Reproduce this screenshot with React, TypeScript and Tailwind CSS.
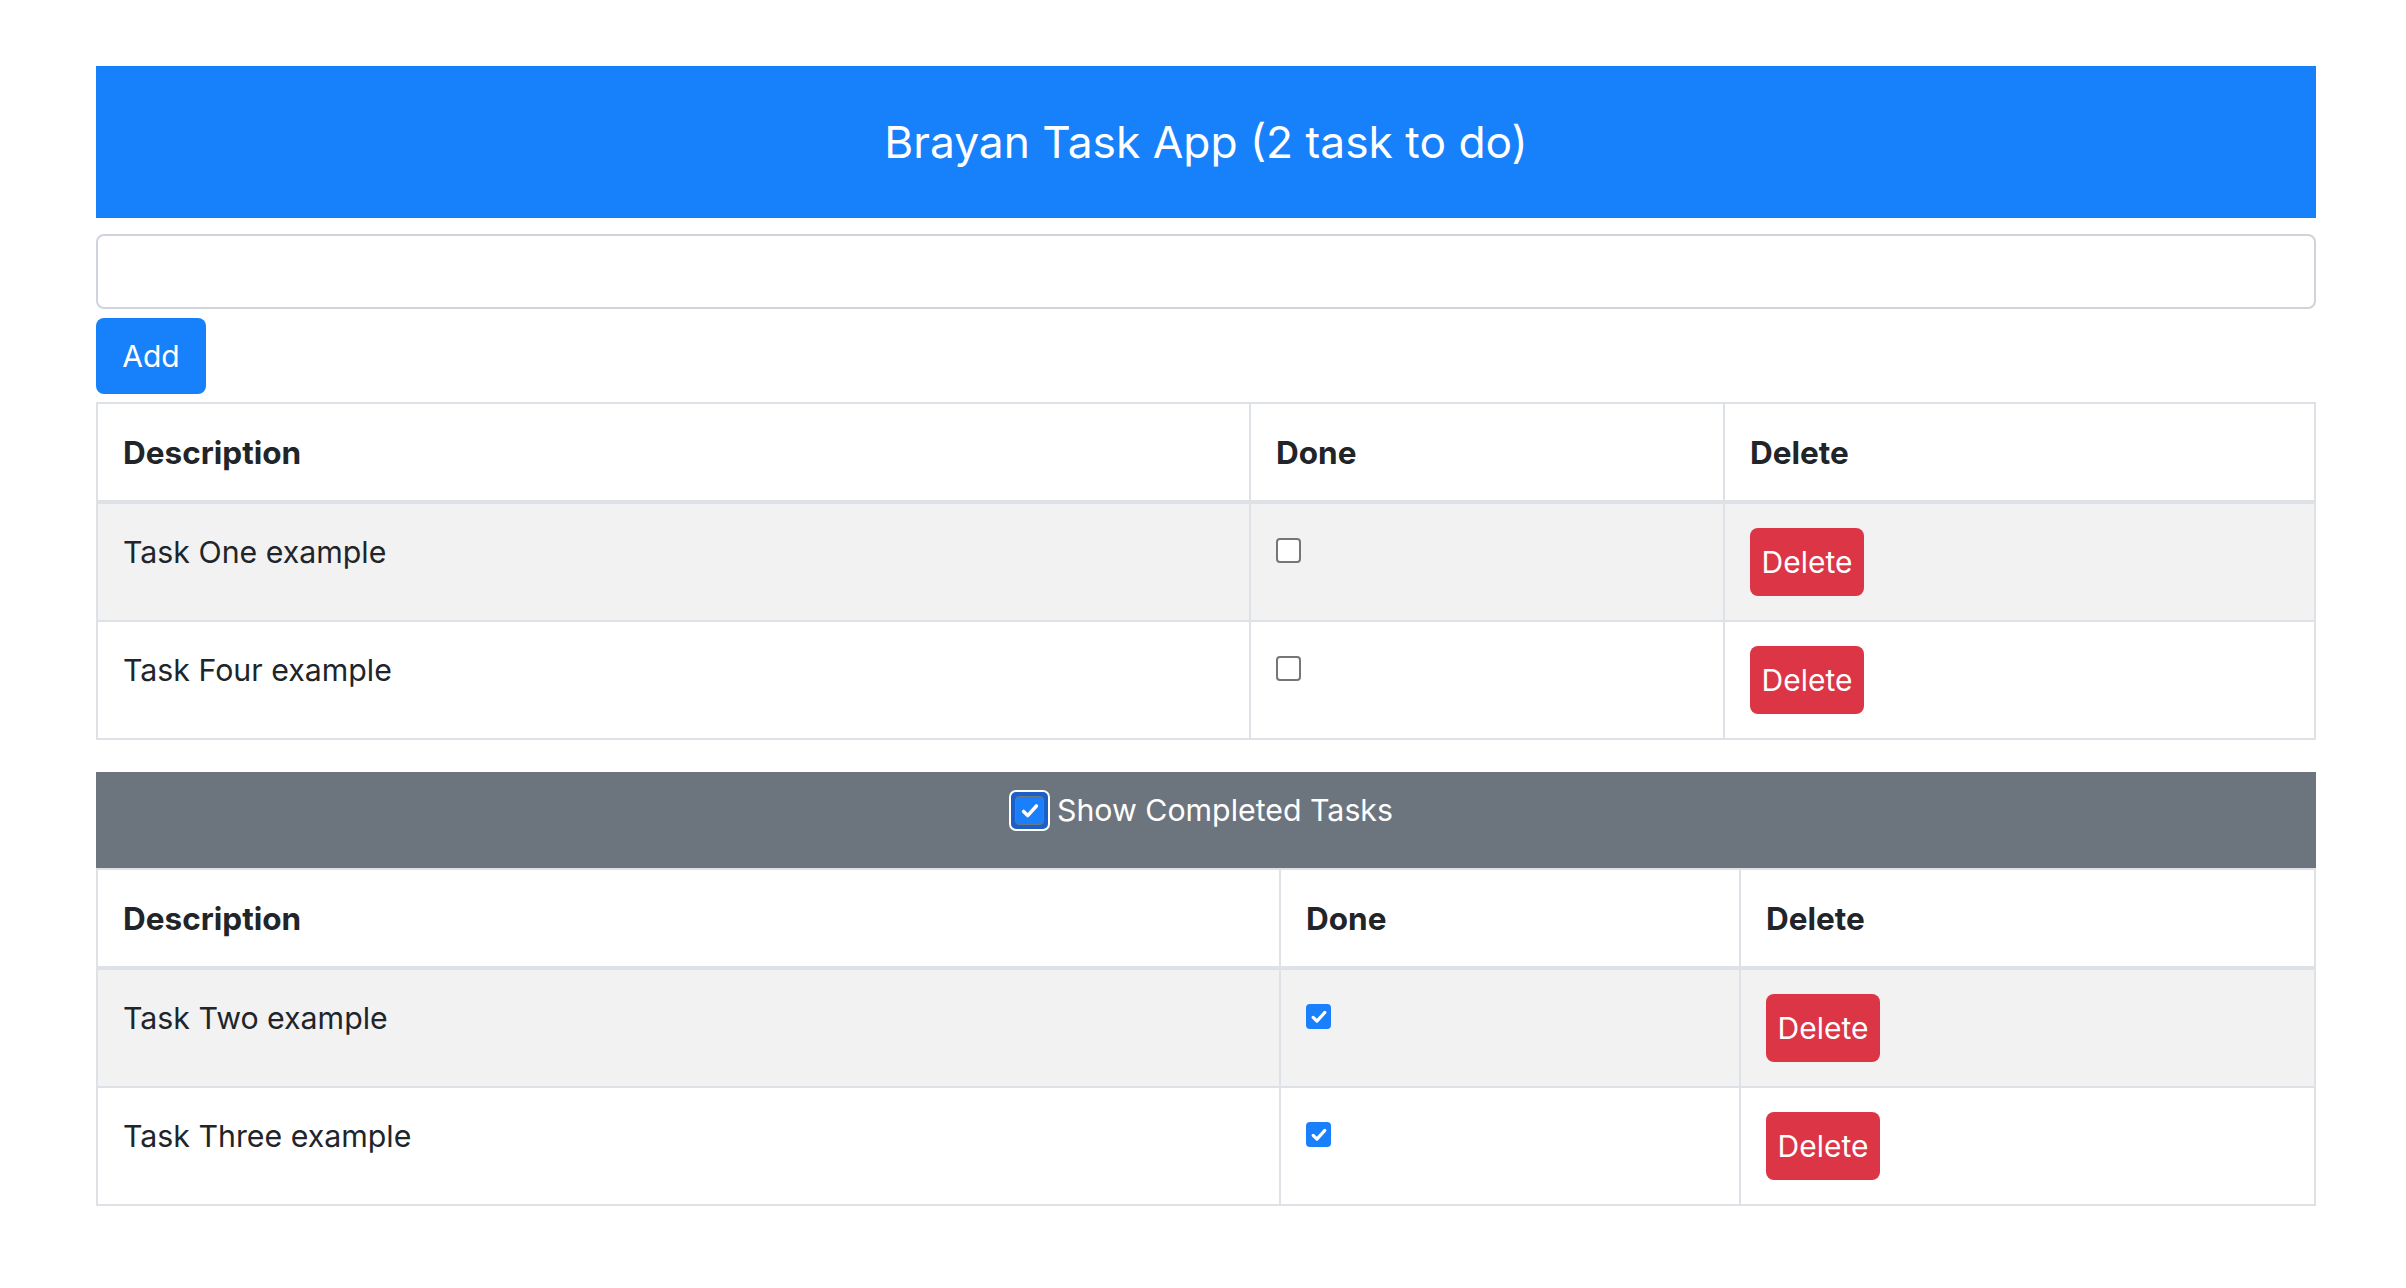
import React from "react";

function CheckIcon({ size = 18, w = 3.4 }: { size?: number; w?: number }) {
  return (
    <svg width={size} height={size} viewBox="0 0 24 24" fill="none">
      <path d="M5 12.5l4.5 4.5L19 6.5" stroke="white" strokeWidth={w} strokeLinecap="round" strokeLinejoin="round" />
    </svg>
  );
}

function Box({ checked }: { checked: boolean }) {
  if (checked) {
    return (
      <span className="mt-[10px] flex h-[25px] w-[25px] items-center justify-center rounded-[4px] bg-[#1a7ffb]">
        <CheckIcon size={20} w={3.8} />
      </span>
    );
  }
  return <span className="mt-[10px] block h-[25px] w-[25px] rounded-[4px] border-2 border-[#767676] bg-white" />;
}

type Row = { text: string; done: boolean };

function TaskTable({ rows, first, second }: { rows: Row[]; first: string; second: string }) {
  return (
    <table className="w-full table-fixed border-collapse border-2 border-[#dee2e6] text-[30px] leading-[45px] text-[#212529]">
      <colgroup>
        <col className={first} />
        <col className={second} />
        <col />
      </colgroup>
      <thead>
        <tr>
          <th className="border-2 border-b-4 border-[#dee2e6] px-[25px] pt-[26px] pb-[25px] text-left text-[31.5px] font-bold">Description</th>
          <th className="border-2 border-b-4 border-[#dee2e6] px-[25px] pt-[26px] pb-[25px] text-left text-[31.5px] font-bold">Done</th>
          <th className="border-2 border-b-4 border-[#dee2e6] px-[25px] pt-[26px] pb-[25px] text-left text-[31.5px] font-bold">Delete</th>
        </tr>
      </thead>
      <tbody>
        {rows.map((r, i) => (
          <tr key={r.text} className={i % 2 === 0 ? "bg-[#f2f2f2]" : "bg-white"}>
            <td className="border-2 border-[#dee2e6] px-[25px] py-[24px] align-top text-[30.3px] leading-[49px]">{r.text}</td>
            <td className="border-2 border-[#dee2e6] px-[25px] py-[24px] align-top">
              <Box checked={r.done} />
            </td>
            <td className="border-2 border-[#dee2e6] px-[25px] py-[24px] align-top">
              <button className="flex h-[68px] w-[114px] items-center justify-center rounded-[8px] bg-[#dc3545] text-[30px] leading-[45px] text-white">
                Delete
              </button>
            </td>
          </tr>
        ))}
      </tbody>
    </table>
  );
}

export default function App() {
  return (
    <div className="min-h-screen bg-white font-['Inter',sans-serif] text-[#212529]">
      <div className="ml-[96px] flex w-[2220px] flex-col pt-[66px] pb-[60px]">
        <div className="flex h-[152px] items-center justify-center bg-[#1780fb]">
          <h1 className="text-[44.3px] font-normal leading-[54px] text-white">Brayan Task App (2 task to do)</h1>
        </div>
        <input
          className="mt-[16px] h-[75px] w-full rounded-[8px] border-2 border-[#ced4da] bg-white px-[18px] text-[30px] outline-none"
          defaultValue=""
        />
        <div className="mt-[9px] flex">
          <button className="flex h-[76px] w-[110px] items-center justify-center rounded-[8px] bg-[#1780fb] text-[30px] leading-[45px] text-white">
            Add
          </button>
        </div>
        <div className="mt-[8px]">
          <TaskTable
            first="w-[1153px]"
            second="w-[474px]"
            rows={[
              { text: "Task One example", done: false },
              { text: "Task Four example", done: false },
            ]}
          />
        </div>
        <div className="mt-[32px] flex h-[96px] items-center justify-center bg-[#6c757d] pr-[10px] pb-[19px]">
          <span className="flex h-[41px] w-[41px] items-center justify-center rounded-[7px] border-2 border-white bg-[#1d5fc6]">
            <span className="flex h-[29px] w-[29px] items-center justify-center rounded-[4px] border border-[#6b7686] bg-[#1a7ffb]">
              <CheckIcon size={22} w={3.8} />
            </span>
          </span>
          <span className="ml-[7px] text-[30.3px] leading-[45px] text-white">Show Completed Tasks</span>
        </div>
        <TaskTable
          first="w-[1183px]"
          second="w-[460px]"
          rows={[
            { text: "Task Two example", done: true },
            { text: "Task Three example", done: true },
          ]}
        />
      </div>
    </div>
  );
}
